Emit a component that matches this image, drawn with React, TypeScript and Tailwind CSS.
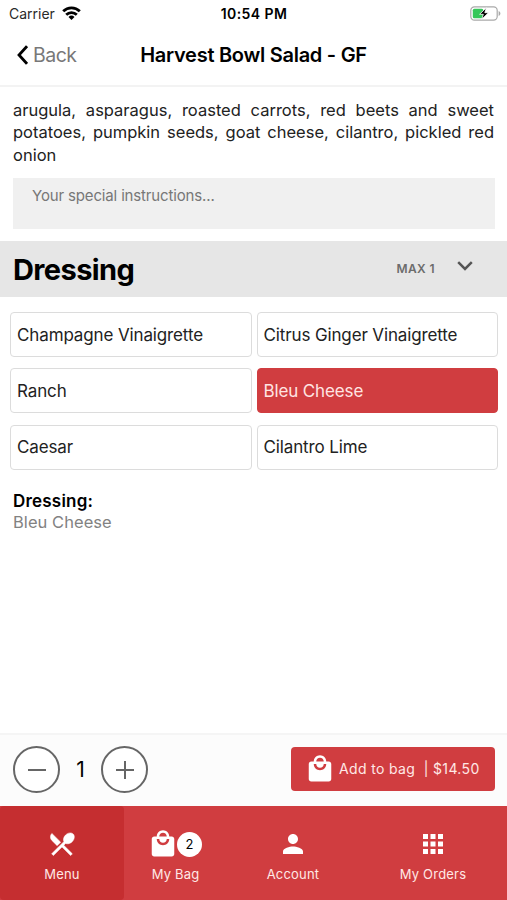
import React, { useState } from "react";
import { MdApps, MdLocalMall, MdPerson } from "react-icons/md";

const DRESSINGS = [
  "Champagne Vinaigrette",
  "Citrus Ginger Vinaigrette",
  "Ranch",
  "Bleu Cheese",
  "Caesar",
  "Cilantro Lime",
];

const PRICE = 14.5;

function StatusBar() {
  return (
    <div className="grid h-7 grid-cols-3 items-center pl-[9px] pr-[6px] text-[14px] leading-none">
      <div className="flex items-center gap-[7px]">
        <span className="text-[#2a2a2a]">Carrier</span>
        <svg className="mb-[2px]" width="19" height="14" viewBox="0 0 19 14" fill="none" stroke="#000" strokeWidth="2.8">
          <path d="M1.2 5.2a11.8 11.8 0 0 1 16.6 0" />
          <path d="M4.2 8.7a7.6 7.6 0 0 1 10.6 0" />
          <path d="M9.5 14 6.5 11a4.3 4.3 0 0 1 6 0z" fill="#000" stroke="none" />
        </svg>
      </div>
      <span className="-ml-[2px] text-center font-semibold whitespace-nowrap tracking-[0.4px]">10:54 PM</span>
      <svg className="mb-[2px] justify-self-end" width="31" height="15" viewBox="0 0 31 15" fill="none">
        <rect x="0.8" y="0.8" width="26.4" height="13.4" rx="3.6" stroke="#a9a9a9" strokeWidth="1.2" />
        <path d="M28.6 5v5c1.1-.4 1.8-1.4 1.8-2.5S29.7 5.4 28.6 5z" fill="#a9a9a9" />
        <rect x="2.8" y="2.8" width="10.5" height="9.4" rx="1.5" fill="#35c759" />
        <path d="M16.3 1.8 9.6 8.3h3.7l-1.5 4.9 6.7-6.5h-3.7z" fill="#000" stroke="#fff" strokeWidth="0.8" />
      </svg>
    </div>
  );
}

function Header() {
  return (
    <header className="grid h-[59px] grid-cols-[1fr_auto_1fr] items-center border-b-2 border-[#f3f3f3] pb-[3px]">
      <button className="flex items-center gap-[5px] pl-[17px] text-[19.5px] tracking-[-0.5px] text-[#787878]">
        <svg width="11" height="20" viewBox="0 0 11 20" fill="none" stroke="#000" strokeWidth="2.8">
          <path d="M10 1.2 2 10l8 8.8" />
        </svg>
        <span className="pt-px">Back</span>
      </button>
      <h1 className="text-[20px] font-semibold tracking-[-0.27px]">Harvest Bowl Salad - GF</h1>
    </header>
  );
}

function CutleryIcon() {
  return (
    <svg width="30" height="30" viewBox="0 0 24 24" fill="#fff" stroke="#fff" strokeWidth="0.4">
      <path d="m8.1 13.34 2.83-2.83L3.91 3.5a4.008 4.008 0 0 0 0 5.66l4.19 4.18zm6.78-1.81c1.53.71 3.68.21 5.27-1.38 1.91-1.91 2.28-4.65.81-6.12-1.46-1.46-4.2-1.1-6.12.81-1.59 1.59-2.09 3.74-1.38 5.27L3.7 19.87l1.41 1.41L12 14.41l6.88 6.88 1.41-1.41L13.41 13l1.47-1.47z" />
    </svg>
  );
}

type TabProps = {
  label: string;
  icon: React.ReactNode;
  className?: string;
};

function Tab({ label, icon, className = "" }: TabProps) {
  return (
    <button className={`flex flex-col items-center pt-[23px] text-white ${className}`}>
      <span className="flex h-[30px] items-center">{icon}</span>
      <span className="mt-[6px] text-[13px] leading-[18px] tracking-[0.2px] text-[#ffe8e6]">{label}</span>
    </button>
  );
}

export default function App() {
  const [selected, setSelected] = useState("Bleu Cheese");
  const [qty, setQty] = useState(1);

  return (
    <div className="flex h-[900px] w-[507px] flex-col overflow-hidden bg-white font-['Inter',sans-serif] text-black">
      <StatusBar />
      <Header />

      <main className="flex-1">
        <p className="mx-[13px] mt-3 text-justify text-[16.5px] leading-[22.4px] text-[#222]">
          arugula, asparagus, roasted carrots, red beets and sweet potatoes, pumpkin seeds, goat
          cheese, cilantro, pickled red onion
        </p>
        <textarea
          className="mx-[13px] mt-[12px] block h-[51px] w-[482px] resize-none bg-[#f0f0f0] px-[19px] py-[8px] text-[15px] leading-5 tracking-[-0.15px] outline-none placeholder:text-[#777]"
          placeholder="Your special instructions..."
        />

        <div className="mt-3 flex h-14 items-center bg-[#e6e6e6] pr-[34px] pl-[13px]">
          <h2 className="mt-[2px] flex-1 text-[29px] font-bold tracking-[-0.6px]">Dressing</h2>
          <span className="text-[12px] font-semibold tracking-[0.4px] text-[#6c6c6c]">MAX 1</span>
          <svg className="mb-[6px] ml-[22px]" width="16" height="10" viewBox="0 0 16 10" fill="none" stroke="#555" strokeWidth="2.5">
            <path d="m1.2 1.2 6.8 6.8 6.8-6.8" />
          </svg>
        </div>

        <div className="mt-[15px] grid grid-cols-2 gap-x-[5px] gap-y-[11.2px] pr-[9px] pl-[10px]">
          {DRESSINGS.map((name) => (
            <button
              key={name}
              onClick={() => setSelected(name)}
              className={`h-[45px] rounded-[4px] border px-[6px] pt-[2px] text-left text-[17px] tracking-[-0.13px] ${
                name === selected
                  ? "border-[#d03d40] bg-[#d03d40] text-[#ffe4e2]"
                  : "border-[#dcdcdc] bg-white text-[#222]"
              }`}
            >
              {name}
            </button>
          ))}
        </div>

        <div className="mt-[21px] px-[13px] text-[16.5px] leading-[21px]">
          <p className="text-[17px] font-semibold tracking-[0.2px]">Dressing:</p>
          <p className="tracking-[0.05px] text-[#828282]">{selected}</p>
        </div>
      </main>

      <div className="flex h-[73px] items-center border-t-2 border-[#f5f5f5] bg-[#fcfcfc] pr-[12px] pb-[2px] pl-[13px]">
        <button
          className="grid size-[47px] place-items-center rounded-full border-2 border-[#666] bg-white"
          onClick={() => setQty(Math.max(1, qty - 1))}
        >
          <svg width="18" height="18" viewBox="0 0 18 18" stroke="#666" strokeWidth="2">
            <path d="M0 9h18" />
          </svg>
        </button>
        <span className="w-[41px] text-center text-[21px]">{qty}</span>
        <button
          className="grid size-[47px] place-items-center rounded-full border-2 border-[#666] bg-white"
          onClick={() => setQty(qty + 1)}
        >
          <svg width="18" height="18" viewBox="0 0 18 18" stroke="#666" strokeWidth="2">
            <path d="M0 9h18M9 0v18" />
          </svg>
        </button>
        <button className="mb-[2px] ml-auto flex h-[44px] w-[204px] items-center rounded-[4px] bg-[#d03d40] pl-[14px] text-[14px] whitespace-pre text-[#ffe8e6]">
          <MdLocalMall size={30} className="text-white" />
          <span className="ml-[4px] tracking-[0.35px]">{`Add to bag  | $${(PRICE * qty).toFixed(2)}`}</span>
        </button>
      </div>

      <nav className="grid h-[94px] grid-cols-[124px_103px_132px_148px] bg-[#d03d40]">
        <Tab label="Menu" icon={<CutleryIcon />} className="rounded-[4px] bg-[#c52e30]" />
        <Tab
          label="My Bag"
          icon={
            <>
              <MdLocalMall size={30} className="-ml-px" />
              <span className="-ml-[1px] grid size-[25px] place-items-center rounded-full bg-white pt-px text-[13px] text-black">
                2
              </span>
            </>
          }
        />
        <Tab label="Account" icon={<MdPerson size={30} />} />
        <Tab label="My Orders" icon={<MdApps size={30} />} />
      </nav>
    </div>
  );
}
